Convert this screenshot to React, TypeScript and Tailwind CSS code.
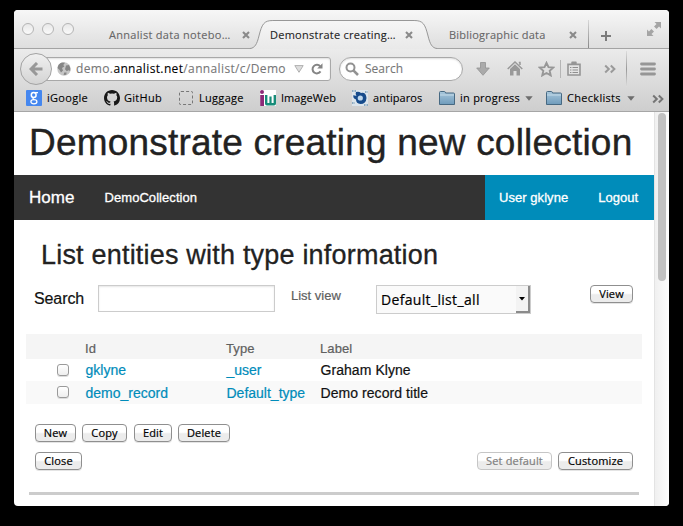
import React from 'react';

const lucida = "font-['Open_Sans','Noto_Sans',sans-serif]";

function CloseX({ className }: { className: string }) {
  return (
    <svg viewBox="0 0 8 8" className={`h-2 w-2 shrink-0 ${className}`}>
      <path d="M1 1 7 7M7 1 1 7" stroke="#8a8a8a" strokeWidth="2.1" />
    </svg>
  );
}

function Folder({ className }: { className: string }) {
  return (
    <svg viewBox="0 0 16 14" className={`h-3.5 w-4 shrink-0 ${className}`}>
      <defs>
        <linearGradient id="folder" x1="0" y1="0" x2="0" y2="1">
          <stop offset="0" stopColor="#a9c8dc" />
          <stop offset="1" stopColor="#6f9bbb" />
        </linearGradient>
      </defs>
      <path d="M.5 13.5V1.5Q.5.5 1.5.5H5.5Q6.3.5 6.5 2H14.5Q15.5 2 15.5 3V13.5Z" fill="url(#folder)" stroke="#476982" />
      <path d="M1 4H15" stroke="#c4dae8" />
    </svg>
  );
}

function Caret({ className }: { className: string }) {
  return (
    <svg viewBox="0 0 8 5" className={`h-[5px] w-2 shrink-0 ${className}`}>
      <path d="M.3.3H7.7L4 4.7Z" fill="#6d6d6d" />
    </svg>
  );
}

function Chevrons({ className, color }: { className: string; color: string }) {
  return (
    <svg viewBox="0 0 12 10" className={`h-2.5 w-3 shrink-0 ${className}`}>
      <path d="M1.2 1.5 4.8 5 1.2 8.5M6.8 1.5 10.4 5 6.8 8.5" fill="none" stroke={color} strokeWidth="2" />
    </svg>
  );
}

function Button({ label, className, disabled }: { label: string; className: string; disabled?: boolean }) {
  return (
    <button
      className={`flex h-[18px] shrink-0 items-center justify-center whitespace-nowrap rounded-[4px] border bg-linear-to-b from-white from-45% to-[#ececec] to-55% pb-0.5 text-[11px] leading-none tracking-[0.15px] ${lucida} ${
        disabled ? 'border-[#c6c6c6] text-[#808080]' : 'border-[#8f8f8f] text-black shadow-[0_1px_0_#e4e4e4]'
      } ${className}`}
    >
      {label}
    </button>
  );
}

function TabStrip() {
  return (
    <div className="relative flex h-[39px] items-start border-b border-[#a3a3a3] bg-linear-to-b from-[#f7f7f7] to-[#dedede] text-[11px] leading-4 text-[#666]">
      <div className="ml-2 mt-[13px] flex gap-2">
        {[0, 1, 2].map((i) => (
          <span key={i} className="h-3 w-3 rounded-full border-[1.5px] border-[#b4b4b4] bg-linear-to-b from-[#e8e8e8] to-[#fafafa]" />
        ))}
      </div>
      <span className="ml-[35px] mt-[17px] w-[131px] whitespace-nowrap tracking-[0.3px]">Annalist data notebo…</span>
      <CloseX className="ml-[2px] mt-[21px]" />
      <div className="relative mt-2.5 flex h-[29px] w-[187px] items-start">
        <svg viewBox="0 0 188 29" preserveAspectRatio="none" className="absolute inset-0 h-[29px] w-[187px]">
          <defs>
            <linearGradient id="tab" x1="0" y1="0" x2="0" y2="1">
              <stop offset="0" stopColor="#f6f6f6" />
              <stop offset="1" stopColor="#e9e9e9" />
            </linearGradient>
          </defs>
          <path d="M0 28.5C5 28 7 24 9 16C12 4 14 .5 23 .5H165C174 .5 176 4 179 16C181 24 183 28 188 28.5V29H0Z" fill="url(#tab)" />
          <path d="M0 28.5C5 28 7 24 9 16C12 4 14 .5 23 .5H165C174 .5 176 4 179 16C181 24 183 28 188 28.5" fill="none" stroke="#979797" />
        </svg>
        <span className="relative ml-5 mt-[7px] w-[132px] whitespace-nowrap tracking-[0.26px] text-[#222]">Demonstrate creating…</span>
        <CloseX className="relative ml-[3px] mt-[11px]" />
      </div>
      <span className="ml-3 mt-[17px] w-[118px] whitespace-nowrap tracking-[0.22px]">Bibliographic data</span>
      <CloseX className="ml-[2px] mt-[21px]" />
      <span className="ml-[11px] mt-2.5 h-[28px] w-px bg-linear-to-b from-[#d8d8d8] to-[#888]" />
      <svg viewBox="0 0 10 10" className="ml-3 mt-[21px] h-2.5 w-2.5">
        <path d="M5 0V10M0 5H10" stroke="#7b7b7b" strokeWidth="2" />
      </svg>
      <svg viewBox="0 0 14 14" className="ml-9 mt-3 h-3.5 w-3.5" fill="#a5a5a5">
        <path d="M7.5 0H14V6.5L12 4.5 9.6 7 7 4.4 9.5 2ZM0 7.5 2 9.5 4.4 7 7 9.6 4.5 12 6.5 14H0Z" />
      </svg>
    </div>
  );
}

function Toolbar() {
  return (
    <div className="flex h-[39px] items-start">
      <div className="relative z-10 ml-1.5 mt-1 flex h-8 w-8 shrink-0 items-center justify-center rounded-full border border-[#a3a3a3] bg-linear-to-b from-[#f0f0f0] to-[#d4d4d4]">
        <svg viewBox="0 0 14 14" className="h-3.5 w-3.5">
          <path d="M13.5 7H2.5M8 1 2 7 8 13" fill="none" stroke="#989898" strokeWidth="3" />
        </svg>
      </div>
      <div className="-ml-2 mt-2 flex h-6 w-[287px] shrink-0 items-center rounded-r-[3px] border border-[#a8a8a8] bg-white shadow-[inset_0_1px_2px_#ddd]">
        <svg viewBox="0 0 14 14" className="ml-3 h-3.5 w-3.5 shrink-0">
          <circle cx="7" cy="7" r="6.7" fill="#c6c6c6" />
          <path d="M.5 6Q1 2 5 .6L8 .8 6.3 3 7.4 4.4 5 6 6 8.5 4 10.6 2.6 8ZM9 3.6 12 3Q14 6 13.2 9L11.4 8.2 9.8 9.2 8 7.2ZM7.2 10.5 9.6 10.4 9.2 12.8 6.6 13Z" fill="#868686" />
        </svg>
        <span className="ml-[5px] w-[218px] whitespace-nowrap text-[12px] leading-none tracking-[0.36px] text-[#777]">
          demo.<span className="text-black">annalist.net</span>/annalist/c/Demo
        </span>
        <svg viewBox="0 0 10 8" className="h-2 w-2.5 shrink-0">
          <path d="M.8.6H9.2L5 7.3Z" fill="#ddd" stroke="#b0b0b0" />
        </svg>
        <svg viewBox="0 0 12 12" className="ml-[7px] h-3 w-3 shrink-0">
          <path d="M9.2 3.4A4.3 4.3 0 1 0 9.5 8.4" fill="none" stroke="#858585" strokeWidth="2" />
          <path d="M11.5.2V5.5H6.2Z" fill="#858585" />
        </svg>
      </div>
      <div className="ml-2 mt-2 flex h-6 w-[124px] shrink-0 items-center rounded-full border border-[#a8a8a8] bg-white shadow-[inset_0_1px_2px_#ddd]">
        <svg viewBox="0 0 14 14" className="ml-[5px] h-3.5 w-3.5 shrink-0">
          <circle cx="5.5" cy="5.5" r="4" fill="none" stroke="#929292" strokeWidth="2" />
          <path d="M8.6 8.6 13 13" stroke="#929292" strokeWidth="2.6" />
        </svg>
        <span className="ml-1.5 text-[12px] leading-none text-[#777]">Search</span>
      </div>
      <svg viewBox="0 0 14 14" className="ml-[13px] mt-[13px] h-3.5 w-3.5 shrink-0">
        <path d="M4.5.5H9.5V6H13.3L7 13.3.7 6H4.5Z" fill="#aaa" stroke="#929292" strokeWidth=".8" />
      </svg>
      <svg viewBox="0 0 16 15" className="ml-[17px] mt-3 h-[15px] w-4 shrink-0">
        <path d="M.7 8 8 1 15.3 8M11.8 1.5H13V4" fill="none" stroke="#999" strokeWidth="1.5" />
        <path d="M3 8 8 3.2 13 8V14.5H9.5V10H6.5V14.5H3Z" fill="#999" />
      </svg>
      <svg viewBox="0 0 17 16" className="ml-[15px] mt-3 h-4 w-[17px] shrink-0">
        <path d="M8.5 1.8 10.5 6.1 15.2 6.6 11.7 9.8 12.7 14.4 8.5 12 4.3 14.4 5.3 9.8 1.8 6.6 6.5 6.1Z" fill="none" stroke="#979797" strokeWidth="1.9" />
      </svg>
      <span className="ml-[5px] mt-[11px] h-[18px] w-px shrink-0 bg-[#b5b5b5]" />
      <svg viewBox="0 0 14 15" className="ml-1.5 mt-3 h-[15px] w-3.5 shrink-0">
        <path d="M1 3.4H13V14H1Z" fill="#e4e4e4" stroke="#959595" strokeWidth="1.6" />
        <path d="M4.3 3.4V1.4Q4.3.6 5 .6H9Q9.7.6 9.7 1.4V3.4Z" fill="#959595" />
        <path d="M3 6.5H4.4M5.5 6.5H11M3 9H4.4M5.5 9H11M3 11.5H4.4M5.5 11.5H11" stroke="#8f8f8f" strokeWidth="1.2" />
      </svg>
      <Chevrons className="ml-[23px] mt-[15px]" color="#9a9a9a" />
      <span className="ml-2.5 mt-0.5 h-[36px] w-px shrink-0 bg-linear-to-b from-[#ddd] via-[#999] to-[#ddd]" />
      <svg viewBox="0 0 16 14" className="ml-[13px] mt-[13px] h-3.5 w-4 shrink-0">
        <path d="M1.5 2H14.5M1.5 7H14.5M1.5 12H14.5" stroke="#969696" strokeWidth="2.8" strokeLinecap="round" />
      </svg>
    </div>
  );
}

function Bookmarks() {
  return (
    <div className="flex h-[23px] items-start whitespace-nowrap text-[11px] leading-[14px] tracking-[0.3px] text-black">
      <div className="ml-3 mt-[2px] flex h-4 w-4 shrink-0 items-center justify-center rounded-[1px] bg-[#4587ef]">
        <svg viewBox="0 0 10 14" className="h-3.5 w-2.5">
          <path d="M9 1.6H5" stroke="#fff" strokeWidth="1.2" />
          <ellipse cx="4.7" cy="4" rx="2.4" ry="2.5" fill="none" stroke="#fff" strokeWidth="1.5" />
          <path d="M4.6 6.6Q3.2 7.6 5 8.4" fill="none" stroke="#fff" strokeWidth="1.2" />
          <ellipse cx="4.9" cy="10.7" rx="3" ry="2.1" fill="none" stroke="#fff" strokeWidth="1.3" />
        </svg>
      </div>
      <span className="ml-[5px] mt-[3px] w-[57px]">iGoogle</span>
      <svg viewBox="0 0 16 16" className="mt-[2px] h-4 w-4 shrink-0" fill="#181818">
        <path d="M8 0C3.58 0 0 3.58 0 8c0 3.54 2.29 6.53 5.47 7.59l1-.38v-1.34c-2.23.48-3.1-1.07-3.1-1.07-.36-.92-.89-1.17-.89-1.17-.73-.5.05-.49.05-.49.81.06 1.23.83 1.23.83.72 1.23 1.87.87 2.33.66.07-.52.28-.87.51-1.07C4.2 11.2 3 10.2 3 7.3c0-.87.31-1.59.82-2.15-.08-.2-.36-1.32.08-2.42 0 0 .9.01 2.2 1.02a7.7 7.7 0 0 1 4 0c1.3-1.04 2.2-1.02 2.2-1.02.44 1.1.16 2.22.08 2.42.51.56.82 1.27.82 2.15 0 2.9-1.47 3.95-3.65 4.25.29.25.54.73.54 1.48v2.2c0 .21.15.46.55.38A8 8 0 0 0 16 8c0-4.42-3.58-8-8-8Z" />
      </svg>
      <span className="ml-1 mt-[3px] w-[55px]">GitHub</span>
      <span className="mt-[3px] h-3.5 w-3.5 shrink-0 rounded-[2px] border border-dashed border-[#777]" />
      <span className="ml-[6px] mt-[3px] w-[61px]">Luggage</span>
      <svg viewBox="0 0 16 16" className="mt-[2px] h-4 w-4 shrink-0">
        <rect width="16" height="16" fill="#fff" />
        <circle cx="2" cy="2" r="2" fill="#8c2a78" />
        <path d="M.2 5H4V16H.2Z" fill="#8c2a78" />
        <path d="M5 5H7.4V13H9.4V6.5H11.6V13H13.6V5H16V13.5Q16 15.5 14 15.5H7Q5 15.5 5 13.5Z" fill="#178c79" />
      </svg>
      <span className="ml-[5px] mt-[3px] w-[71px] tracking-[0.05px]">ImageWeb</span>
      <svg viewBox="0 0 16 16" className="mt-[2px] h-4 w-4 shrink-0">
        <rect width="16" height="16" fill="#dce5ec" />
        <path d="M4 2Q7 1 9 3Q14 2 14.5 8Q14 14 8.5 14Q4 13.5 4 9.5Q.5 8 1.5 5Q3 6 4.5 5.5Q3 4 4 2Z" fill="#164b8c" />
        <circle cx="8.3" cy="8" r="2.6" fill="#bdd7ed" />
        <path d="M0 1H4M13 2H16M0 13H3M12 15H16" stroke="#8dabc2" strokeWidth="2" strokeDasharray="1.5 1" />
      </svg>
      <span className="ml-[5px] mt-[3px] w-[66px] tracking-[0.05px]">antiparos</span>
      <Folder className="mt-[3px]" />
      <span className="ml-[5px] mt-[3px] w-[65px] tracking-[0.25px]">in progress</span>
      <Caret className="mt-2" />
      <Folder className="ml-[13px] mt-[3px]" />
      <span className="ml-[5px] mt-[3px] w-[60px]">Checklists</span>
      <Caret className="mt-2" />
      <Chevrons className="ml-[17px] mt-[6px]" color="#757575" />
    </div>
  );
}

function Row({ id, type, label, className }: { id: string; type: string; label: string; className: string }) {
  return (
    <div className={`grid grid-cols-[31px_28px_141px_94px_1fr] text-[14px] ${className}`}>
      <span />
      <span className="mt-[5px] h-3 w-3 rounded-[3px] border border-[#9a9a9a] bg-linear-to-b from-white to-[#eee] shadow-[0_1px_0_#ddd]" />
      <span className="pl-[0.5px] text-[#008cba]">{id}</span>
      <span className="pl-[0.5px] text-[#008cba]">{type}</span>
      <span className="pl-[0.5px] tracking-[0.06px] text-[#111]">{label}</span>
    </div>
  );
}

export default function App() {
  return (
    <div className="h-[526px] w-[683px] overflow-hidden bg-black px-3.5 pt-2.5">
      <div className="flex h-[496px] w-[655px] flex-col overflow-hidden rounded-[4px] bg-white">
        <header className={`[-webkit-text-stroke:0.1px] ${lucida}`}>
          <TabStrip />
          <div className="border-b border-[#a6a6a6] bg-linear-to-b from-[#ebebeb] to-[#cecece]">
            <Toolbar />
            <Bookmarks />
          </div>
        </header>
        <div className="flex min-h-0 flex-1 font-['Liberation_Sans',Arial,sans-serif] [-webkit-text-stroke:0.2px]">
          <main className="w-[640px] shrink-0">
            <h1 className="h-[63px] whitespace-nowrap pl-[15px] text-[37px] leading-[62px] tracking-[0.2px] text-[#222] [-webkit-text-stroke:0.4px]">
              Demonstrate creating new collection
            </h1>
            <nav className="flex h-[45px] items-center bg-[#333] text-[13px] leading-none text-white [-webkit-text-stroke:0.3px]">
              <span className="ml-[15px] w-[75.5px] text-[17px]">Home</span>
              <span className="tracking-[0.06px]">DemoCollection</span>
              <div className="ml-auto flex h-full w-[169px] items-center gap-[30px] bg-[#008cba] pl-3.5 tracking-[0.05px]">
                <span>User gklyne</span>
                <span>Logout</span>
              </div>
            </nav>
            <h2 className="mt-[18px] h-[47px] whitespace-nowrap pl-[27px] text-[27px] leading-[34px] tracking-[0.2px] text-[#222] [-webkit-text-stroke:0.3px]">
              List entities with type information
            </h2>
            <div className="flex h-[49px] items-start">
              <label className="ml-5 mt-[5px] w-16 text-[16px] leading-[18px] tracking-[-0.1px] text-[#111]">Search</label>
              <div className="h-[27px] w-[177px] border border-[#ccc] bg-white shadow-[inset_0_1px_2px_rgba(0,0,0,0.1)]" />
              <span className="ml-4 mt-[3px] w-[85px] text-[13px] leading-4 text-[#606060]">List view</span>
              <div className="flex h-[29px] w-[155px] items-center justify-between border border-[#ccc] bg-[#fafafa]">
                <span className={`pl-1 text-[14px] leading-none tracking-[0.33px] text-black ${lucida}`}>Default_list_all</span>
                <span className="flex h-[27px] w-3.5 items-center justify-center border-b-2 border-r-2 border-[#8b8b8b] bg-[#f3f3f3]">
                  <svg viewBox="0 0 6 4" className="h-1 w-1.5">
                    <path d="M0 0H6L3 3.5Z" />
                  </svg>
                </span>
              </div>
              <Button label="View" className="ml-[59px] w-[43px]" />
            </div>
            <section className="ml-3 w-[616px]">
              <div className="grid h-[25px] grid-cols-[59px_141px_94px_1fr] bg-[#f5f5f5] text-[13px] leading-[29px] tracking-[0.1px] text-[#606060]">
                <span />
                <span>Id</span>
                <span>Type</span>
                <span>Label</span>
              </div>
              <Row id="gklyne" type="_user" label="Graham Klyne" className="h-[22px] leading-[22px]" />
              <Row id="demo_record" type="Default_type" label="Demo record title" className="h-[23px] bg-[#f9f9f9] leading-[24px]" />
            </section>
            <div className="mt-5 flex pl-[21px]">
              <Button label="New" className="w-[41px]" />
              <Button label="Copy" className="ml-1.5 w-[45px]" />
              <Button label="Edit" className="ml-[7px] w-[38px]" />
              <Button label="Delete" className="ml-1.5 w-[52px]" />
            </div>
            <div className="mt-2.5 flex pl-[21px] pr-[21px]">
              <Button label="Close" className="w-[47px]" />
              <Button label="Set default" disabled className="ml-auto w-[75px]" />
              <Button label="Customize" className="ml-1.5 w-[75px]" />
            </div>
            <div className="ml-[15px] mt-[22px] h-[3px] w-[610px] bg-[#ccc]" />
          </main>
          <aside className="flex w-[15px] justify-center border-l border-[#e3e3e3] bg-linear-to-r from-[#f0f0f0] to-[#fcfcfc] pt-px">
            <div className="h-[168px] w-2 rounded-full bg-[#c1c1c1]" />
          </aside>
        </div>
      </div>
    </div>
  );
}
